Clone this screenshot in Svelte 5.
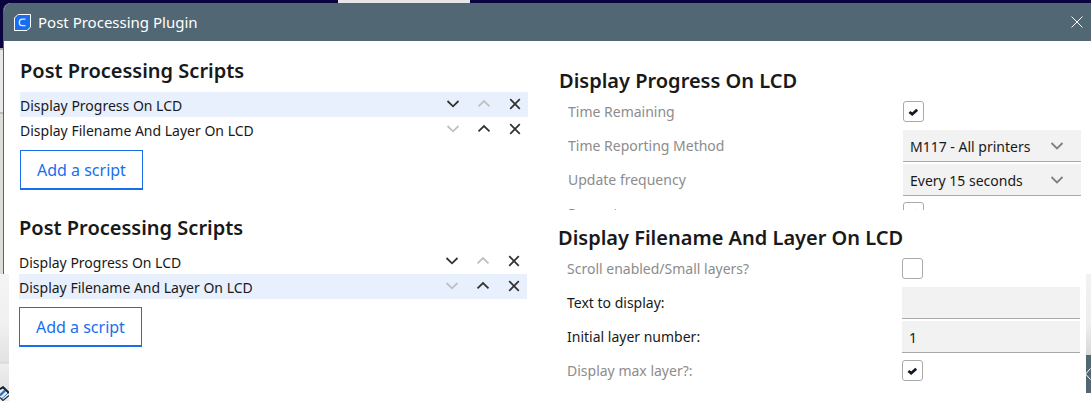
<script>
  const scripts = ['Display Progress On LCD', 'Display Filename And Layer On LCD'];

  const panels = [
    {
      id: 'progress',
      selected: 0,
      title: 'Display Progress On LCD',
      settings: [
        { label: 'Time Remaining', type: 'check', value: true, dim: true },
        { label: 'Time Reporting Method', type: 'select', value: 'M117 - All printers', dim: true },
        { label: 'Update frequency', type: 'select', value: 'Every 15 seconds', dim: true },
        { label: 'Percentage', type: 'check', value: true, dim: true, cut: true },
      ],
    },
    {
      id: 'filename',
      selected: 1,
      title: 'Display Filename And Layer On LCD',
      settings: [
        { label: 'Scroll enabled/Small layers?', type: 'check', value: false, dim: true },
        { label: 'Text to display:', type: 'text', value: '' },
        { label: 'Initial layer number:', type: 'text', value: '1' },
        { label: 'Display max layer?:', type: 'check', value: true, dim: true },
      ],
    },
  ];
</script>

<div class="desktop">
  <div class="tab"></div>

  <main class="window">
    <header class="titlebar">
      <svg class="logo" viewBox="0 0 17 17" aria-hidden="true">
        <path d="M4 .5H16.5V13L13 16.5H.5V4Z" fill="#196ef0" stroke="#fff" />
        <path d="M11.5 5.2H8.2Q5.3 5.2 5.3 8.4T8.2 11.6H11.5" fill="none" stroke="#dce9ff" stroke-width="1.3" />
      </svg>
      <h1>Post Processing Plugin</h1>
      <button class="close" aria-label="Close">
        <svg viewBox="0 0 12 12"><path d="M.5 .5 11.5 11.5M11.5 .5 .5 11.5" /></svg>
      </button>
    </header>

    {#each panels as panel (panel.id)}
      <section class="panel {panel.id}">
        <div class="scripts">
          <h2>Post Processing Scripts</h2>
          <ul>
            {#each scripts as name, i}
              <li class:selected={i === panel.selected}>
                <span class="name">{name}</span>
                <button class="icon" aria-label="Move down" disabled={i === 1}>
                  <svg viewBox="0 0 14 14"><path d="M1.5 4 7 9.3 12.5 4" /></svg>
                </button>
                <button class="icon" aria-label="Move up" disabled={i === 0}>
                  <svg viewBox="0 0 14 14"><path d="M1.5 9.3 7 4 12.5 9.3" /></svg>
                </button>
                <button class="icon" aria-label="Remove">
                  <svg viewBox="0 0 14 14"><path d="M2.2 2.2 11.8 11.8M11.8 2.2 2.2 11.8" /></svg>
                </button>
              </li>
            {/each}
          </ul>
          <button class="add">Add a script</button>
        </div>

        <div class="settings">
          <h2>{panel.title}</h2>
          {#each panel.settings as s, i}
            <div class="setting" class:cut={s.cut}>
              <label for="{panel.id}-{i}" class:dim={s.dim}>{s.label}</label>
              {#if s.type === 'check'}
                <span class="check">
                  <input id="{panel.id}-{i}" type="checkbox" checked={s.value} />
                  <svg viewBox="0 0 21 21" aria-hidden="true"><path d="M6.4 11 9.2 13.2 14.2 8.8" /></svg>
                </span>
              {:else if s.type === 'select'}
                <span class="combo">
                  <select id="{panel.id}-{i}"><option>{s.value}</option></select>
                  <svg viewBox="0 0 14 14" aria-hidden="true"><path d="M1.5 4 7 9.5 12.5 4" /></svg>
                </span>
              {:else}
                <input class="field" id="{panel.id}-{i}" type="text" value={s.value} />
              {/if}
            </div>
          {/each}
        </div>
      </section>
    {/each}
  </main>

  <div class="strip left">
    <svg viewBox="0 0 9 15" aria-hidden="true">
      <path d="M0 3 3 1 9 7V15H0Z" fill="#e9eef2" />
      <path d="M0 3.2 3 1.2 9 7" fill="none" stroke="#14212b" stroke-width="2" />
      <path d="M0 9.5 5 4.5" stroke="#2c6fb5" stroke-width="2.4" />
      <path d="M1 13.5 8 7" stroke="#2c6fb5" stroke-width="1" />
      <path d="M0 11.5 3 14.5 9 9.5" stroke="#1b2b38" stroke-width="1.2" />
    </svg>
  </div>
  <div class="strip right">
    <div class="peek">
      <svg viewBox="0 0 5 12" aria-hidden="true"><path d="M4.5 .5-.5 6 4.5 11.5" /></svg>
    </div>
  </div>
</div>

<style>
  :global(body) {
    margin: 0;
    background: #fff;
  }

  .desktop {
    position: relative;
    display: flow-root;
    min-height: 100vh;
    overflow: hidden;
    background: linear-gradient(#0a0540 48px, #aaa 48px 50px, #e8e8e6 50px 112px, #bbb 112px 114px, #deddda 114px);
    color: #191919;
    font: 14px/20px 'Noto Sans', sans-serif;
  }

  .tab {
    position: absolute;
    top: 0;
    left: 31%;
    width: 132px;
    height: 3px;
    background: #e6e6e6;
  }

  .window {
    position: relative;
    display: flex;
    flex-direction: column;
    box-sizing: border-box;
    min-height: calc(100vh - 3px);
    margin: 3px 0 0 3px;
    overflow: hidden;
    border-left: 1px solid #516570;
    border-radius: 8px 0 0 0;
    background: #fff;
  }

  button {
    display: grid;
    place-items: center;
    margin: 0;
    padding: 0;
    border: 0;
    background: none;
    color: inherit;
    font: inherit;
  }

  svg {
    display: block;
    fill: none;
  }

  .titlebar {
    display: flex;
    align-items: center;
    height: 38px;
    padding: 0 8px 0 10px;
    background: #516773;
    color: #fff;
  }

  .logo {
    width: 17px;
    height: 17px;
    margin-right: 7px;
  }

  h1 {
    flex: 1;
    margin: 0;
    font: inherit;
    font-size: 15px;
  }

  .close svg {
    width: 12px;
    height: 12px;
    stroke: #fff;
  }

  .panel {
    display: grid;
    grid-template-columns: 508fr 522fr;
    gap: 31px;
    padding: 0 10px 0 16px;
  }

  .filename {
    padding: 0 11px 0 15px;
  }

  .progress .scripts {
    padding-top: 16px;
  }

  .filename .scripts {
    padding-top: 4px;
  }

  .progress .settings {
    padding-top: 26px;
  }

  .filename .settings {
    padding-top: 14px;
  }

  h2 {
    margin: 0;
    font-size: 20px;
    font-weight: 600;
    line-height: 28px;
  }

  ul {
    margin: 7px 0 8px;
    padding: 0;
    list-style: none;
  }

  li {
    display: flex;
    align-items: center;
    gap: 17px;
    height: 25px;
    padding-right: 6px;
  }

  .selected {
    background: #e8f0fe;
  }

  .name {
    flex: 1;
    padding-top: 2px;
  }

  .icon {
    padding-bottom: 1px;
  }

  .icon svg {
    width: 14px;
    height: 14px;
    stroke: #333;
    stroke-width: 1.8;
  }

  .icon:disabled svg {
    stroke: #c0c0c0;
  }

  .add {
    height: 40px;
    padding: 0 16px;
    border: 1px solid #196ef0;
    border-bottom-width: 2px;
    color: #196ef0;
    font-size: 16px;
  }

  .setting {
    display: grid;
    grid-template-columns: 335fr 178fr;
    align-items: center;
    height: 34px;
    padding-left: 9px;
  }

  .cut {
    align-items: start;
    height: 13px;
    overflow: hidden;
  }

  .cut label {
    padding-top: 7px;
  }

  .cut .check {
    padding-top: 5px;
  }

  .dim {
    color: #8c8c8c;
  }

  .check,
  .combo {
    display: grid;
    align-items: center;
  }

  .check {
    padding-bottom: 1px;
  }

  .check > *,
  .combo > * {
    grid-area: 1 / 1;
  }

  .check input {
    box-sizing: border-box;
    width: 21px;
    height: 21px;
    margin: 0;
    appearance: none;
    border: 1px solid #aaa;
    border-radius: 3px;
    background: #fff;
  }

  .check svg {
    z-index: 1;
    width: 21px;
    height: 21px;
    pointer-events: none;
    stroke: #101b26;
    stroke-width: 2.8;
  }

  input:not(:checked) + svg {
    visibility: hidden;
  }

  select,
  .field {
    box-sizing: border-box;
    width: 100%;
    height: 32px;
    margin: 0;
    padding: 1px 7px 0;
    appearance: none;
    border: 0;
    border-bottom: 1px solid #aaa;
    border-radius: 0;
    background: #f2f2f2;
    color: inherit;
    font: inherit;
  }

  select {
    padding-top: 2px;
  }

  .combo svg {
    justify-self: end;
    width: 14px;
    height: 14px;
    margin-right: 17px;
    pointer-events: none;
    stroke: #808080;
    stroke-width: 1.8;
  }

  .strip {
    position: absolute;
    top: 274px;
    bottom: 0;
  }

  .left {
    left: 0;
    display: flex;
    align-items: end;
    width: 9px;
    background: linear-gradient(#f4f4f4, #f0f0f0 50px, #e2e2e2 88px, #d0d0d0 89px, #eee 90px, #dedede);
  }

  .left svg {
    width: 9px;
    height: 15px;
  }

  .right {
    right: 0;
    width: 5px;
    padding-top: 81px;
    box-sizing: border-box;
    background: linear-gradient(#f2f2f2, #eee 50px, #d8d8d8 81px, #fff 81px);
  }

  .peek {
    display: grid;
    align-items: center;
    height: 38px;
    background: #516773;
  }

  .peek svg {
    width: 5px;
    height: 12px;
    stroke: #fff;
  }
</style>
